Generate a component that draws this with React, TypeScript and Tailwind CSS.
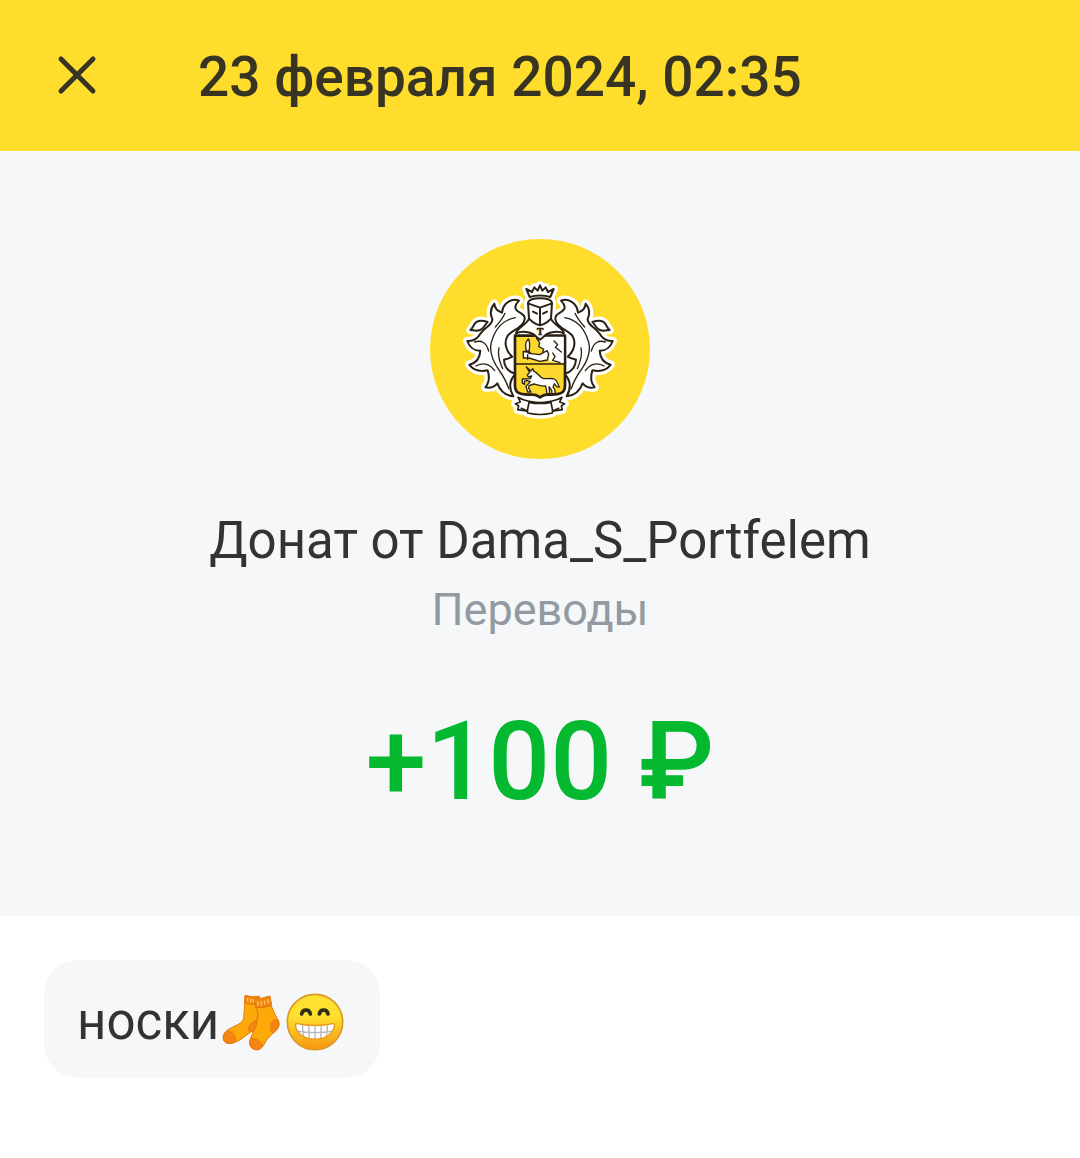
const operation = {
  date: "23 февраля 2024, 02:35",
  title: "Донат от Dama_S_Portfelem",
  category: "Переводы",
  amount: "+100 ₽",
  message: "носки",
};

const wreath =
  "M177 92C158 84 130 96 126 128C113 124 104 114 103 101C93 113 89 130 97 147C99 164 76 171 62 190C53 206 42 215 22 213C28 230 42 243 61 242C60 264 50 279 28 284C40 301 62 306 83 301C90 323 88 338 76 352C92 355 105 349 112 340C120 361 136 377 160 379C147 357 146 331 167 312C146 306 133 293 132 269C140 267 149 265 157 260C137 243 131 217 143 197C156 180 189 174 194 148C198 126 165 130 166 111C167 102 172 97 177 92Z";

const leaf = "M31 180C36 176 39 170 43 163C52 148 69 151 83 156C73 164 71 183 48 182C41 181 36 181 31 180Z";

const crown = "M209 81L199 57L216 66L223 52L233 62L240 46L247 62L257 52L264 66L281 57L271 81Q240 72 209 81Z";

const helmet = "M204 98C208 80 272 80 276 98L273 146C264 156 252 163 240 166C228 163 216 156 207 146Z";

const shoulders = "M168 190C173 170 197 168 207 146L240 164L273 146C283 168 307 170 312 190C288 180 261 188 251 200L240 209L229 200C219 188 192 180 168 190Z";

const shield = "M165 197H315V347C315 374 291 374 262 374C250 374 246 378 240 382C234 378 230 374 218 374C189 374 165 374 165 347Z";

const ribbon =
  "M166 401L181 396L174 382C187 390 201 393 212 395Q240 401 268 395C279 393 293 390 306 382L299 396L314 401L304 408L307 419Q294 422 278 423L277 429Q240 438 203 429L202 423Q186 422 173 419L176 408Z";

function WreathHalf() {
  return (
    <>
      <path d={wreath} />
      <path d={leaf} />
      <path
        d="M166 143C126 150 104 181 94 217C85 252 103 281 119 303C132 321 141 341 147 357M135 130C129 143 118 158 106 171M44 216C65 209 79 218 86 243M48 288C72 275 91 284 104 302M117 234C112 255 119 276 128 296"
        fill="none"
        strokeWidth="4"
      />
    </>
  );
}

function Crest() {
  return (
    <svg
      viewBox="0 0 480 450"
      className="w-[160px] h-[150px]"
      strokeLinejoin="round"
      strokeLinecap="round"
      aria-hidden="true"
    >
      {/* white edge round the whole emblem */}
      <g fill="#fff" stroke="#fff" strokeWidth="25">
        <path d={wreath} />
        <path d={leaf} />
        <g transform="translate(480 0) scale(-1 1)">
          <path d={wreath} />
          <path d={leaf} />
        </g>
        <path d="M180 120H300L350 200V360H130V200Z" strokeWidth="1" />
        <path d={crown} />
        <path d={helmet} />
        <path d={shoulders} />
        <path d={shield} />
        <path d={ribbon} />
      </g>

      <g fill="#fff" stroke="#2a2115" strokeWidth="6">
        <WreathHalf />
        <g transform="translate(480 0) scale(-1 1)">
          <WreathHalf />
        </g>
        <path d={crown} />

        {/* shield */}
        <path d={shield} fill="#fcd72d" strokeWidth="8" />
        <path d="M230 200L239 219L236 230L251 237L248 246L257 253L263 245L267 272L282 277L311 279V200Z" stroke="none" />
        <path
          d="M230 205L239 219L236 230L251 237L248 246L257 253M282 213L293 224L286 232L304 246M278 249L285 260L278 271L300 278"
          fill="none"
          strokeWidth="4"
        />
        <path d="M190 245L201 243L207 250L239 254L261 242L266 252L262 270L240 274L207 264L190 264Z" strokeWidth="4" />
        <path d="M200 243C194 230 197 214 205 207C212 216 209 231 207 245Z" strokeWidth="4" />
        <path d="M190 245L211 247M203 254V268" fill="none" strokeWidth="4" />
        <path d="M169 282H311" fill="none" strokeWidth="5" />
        <path
          d="M199 291L212 303L218 296L222 304C234 308 238 321 249 325C260 328 273 323 283 327C293 331 292 342 298 351L290 350L283 341L279 351L285 360V371H276L275 361L267 350L269 371H261L257 348C245 350 232 345 222 342L207 347L206 355L213 366H203L198 349L211 335L200 331L193 335L194 343L187 339V327L211 326L215 318L205 321L202 315L209 307Z"
          strokeWidth="4"
        />

        {/* knight */}
        <path d={shoulders} />
        <path d={helmet} />
        <path d="M206 101L240 113L274 101M240 113V164" fill="none" strokeWidth="6" />
        <path d="M219 125L231 131M261 125L249 131" fill="none" strokeWidth="6" />

        {/* ribbon */}
        <path d={ribbon} strokeWidth="5" />
        <path d="M202 423L207 397Q240 404 273 397L278 423M202 423L184 415M278 423L296 415" fill="none" strokeWidth="5" />
      </g>
      <text
        x="240"
        y="196"
        textAnchor="middle"
        fill="#2a2115"
        stroke="#2a2115"
        strokeWidth="2"
        className="font-['Liberation_Serif',serif] text-[28px] font-bold"
      >
        T
      </text>
    </svg>
  );
}

function Socks() {
  return (
    <svg viewBox="0 0 174 174" className="w-[58px] h-[58px]" strokeLinejoin="round" role="img" aria-label="🧦">
      <g stroke="#e47a0c" strokeWidth="3">
        <path
          d="M69 24L65 76C60 93 43 95 18 110C4 119 -1 137 8 146C19 157 37 149 52 142L88 116C105 105 104 86 106 69L111 31Z"
          fill="#fda90a"
        />
        <path d="M18 113C33 115 44 130 41 147C27 153 12 153 6 143C0 130 7 119 18 113Z" fill="#f58512" />
        <path d="M105 82C89 86 79 98 80 112L91 117C103 107 106 96 105 82Z" fill="#f58512" />
        <path
          d="M102 42C109 61 109 77 103 98C97 116 86 126 84 145C82 162 94 172 108 170C122 168 127 151 136 138L162 112C174 100 171 85 163 72L148 39Z"
          fill="#fda90a"
        />
        <path d="M84 139C94 132 111 140 122 156C116 169 104 173 94 168C83 162 81 151 84 139Z" fill="#f58512" />
        <path d="M168 80C153 77 142 91 147 113L152 120C168 110 177 98 168 80Z" fill="#f58512" />
        <path d="M69 7L67 29Q86 37 104 33L113 10Q91 14 69 7Z" fill="#f0860f" />
        <path d="M97 17L100 44Q123 47 149 37L144 9Q120 18 97 17Z" fill="#f0860f" />
      </g>
      <path
        d="M77 15V26M86 17V29M94 18V28M107 24L109 37M117 24L119 37M127 22L129 35M137 18L140 31"
        fill="none"
        stroke="#ffc46b"
        strokeWidth="4"
      />
    </svg>
  );
}

function Grin() {
  return (
    <svg viewBox="0 0 174 174" className="w-[58px] h-[58px]" strokeLinecap="round" role="img" aria-label="😁">
      <defs>
        <linearGradient id="face" x1="0" y1="0" x2="0" y2="1">
          <stop offset="40%" stopColor="#fde030" />
          <stop offset="100%" stopColor="#f7960f" />
        </linearGradient>
        <clipPath id="mouth">
          <path d="M34 92Q87 103 140 92C146 91 146 97 145 101C135 151 39 151 29 101C28 97 28 91 34 92Z" />
        </clipPath>
      </defs>
      <circle cx="87" cy="87" r="83" fill="url(#face)" stroke="#dc9a24" strokeWidth="5" />
      <path d="M47 63C50 47 70 47 73 63M100 63C103 47 123 47 126 63" fill="none" stroke="#302f16" strokeWidth="11" />
      <g clipPath="url(#mouth)">
        <path d="M25 85H149V150H25Z" fill="#fff" />
        <path
          d="M29 114Q87 124 145 114M87 94V142M68 94L70 142M106 94L104 142M49 92L53 138M125 92L121 138"
          fill="none"
          stroke="#b3b6ba"
          strokeWidth="4"
        />
      </g>
      <path
        d="M34 92Q87 103 140 92C146 91 146 97 145 101C135 151 39 151 29 101C28 97 28 91 34 92Z"
        fill="none"
        stroke="#e79a1b"
        strokeWidth="4"
      />
    </svg>
  );
}

export default function App() {
  return (
    <div className="min-h-screen bg-white text-[#333333] font-[Roboto,sans-serif]">
      <header className="flex items-center gap-[92px] h-[151px] px-12 bg-[#ffdd2d] text-[#383424]">
        <button type="button" aria-label="Закрыть" className="shrink-0">
          <svg viewBox="0 0 58 58" className="w-[58px] h-[58px]" fill="none" stroke="currentColor" strokeWidth="5" strokeLinecap="round">
            <path d="M13 12L45 44M45 12L13 44" />
          </svg>
        </button>
        <h1 className="pt-0.5 text-[55px] leading-[64px] font-medium whitespace-nowrap">{operation.date}</h1>
      </header>

      <main>
        <section className="flex flex-col items-center pt-[88px] pb-[87px] bg-[#f5f7f8]">
          <div className="flex items-center justify-center size-[220px] pb-2 rounded-full bg-[#ffdd2d]">
            <Crest />
          </div>
          <h2 className="mt-[49px] text-[51px] leading-[66px]">{operation.title}</h2>
          <p className="mt-1.5 text-[45px] leading-[60px] text-[#9299a2]">{operation.category}</p>
          <p className="mt-[55px] text-[109px] leading-[134px] font-medium text-[#04b92f]">{operation.amount}</p>
        </section>

        <section className="px-11 py-11">
          <p className="inline-flex items-center h-[118px] pt-1.5 pl-[33px] pr-9 rounded-[34px] bg-[#f5f7f8] text-[51px] leading-[60px]">
            <span>{operation.message}</span>
            <span className="flex items-center gap-1.5 ml-[3px]">
              <Socks />
              <Grin />
            </span>
          </p>
        </section>
      </main>
    </div>
  );
}
